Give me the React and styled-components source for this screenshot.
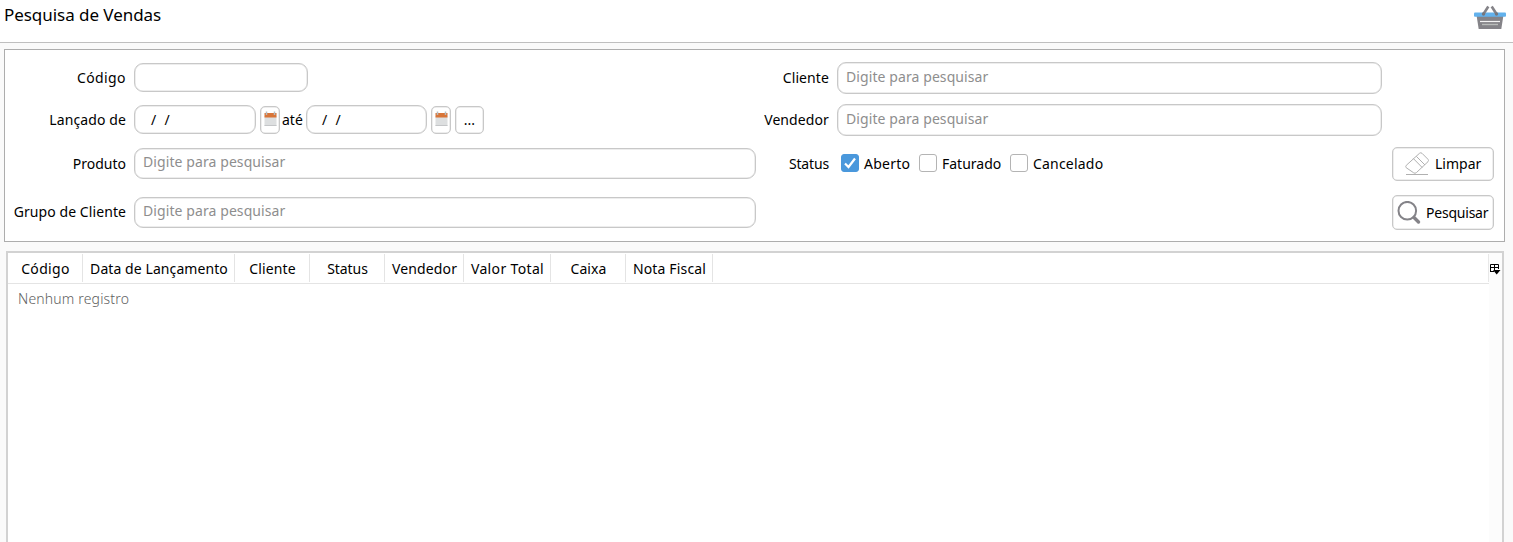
import React from "react";
import styled, { createGlobalStyle } from "styled-components";

const Global = createGlobalStyle`
  * { box-sizing: border-box; }
  html, body { margin: 0; height: 100%; overflow: hidden; background: #fafafa; }
  body { font-family: "Noto Sans", "Open Sans", sans-serif; font-size: 14px; color: #000; }
  button, input { font: inherit; color: inherit; }
`;

const Page = styled.div`
  height: 542px;
  display: flex;
  flex-direction: column;
  overflow: hidden;
`;

const Header = styled.header`
  height: 43px;
  flex: none;
  display: flex;
  justify-content: space-between;
  align-items: flex-start;
  padding: 3px 7px 0 4px;
  background: #fff;
  border-bottom: 1px solid #bfbfbf;
`;

const Title = styled.h1`
  margin: 0;
  font-size: 17px;
  font-weight: 400;
  line-height: 24px;
  letter-spacing: -0.05px;
`;

const Text = styled.span`
  display: inline-block;
  white-space: nowrap;
  line-height: 20px;
  letter-spacing: ${(p) => p.$ls ?? 0}px;
`;

const Panel = styled.section`
  flex: none;
  display: flex;
  width: 1501px;
  height: 193px;
  margin: 6px 0 0 4px;
  border: 1px solid #adadad;
  background: #fff;
`;

const Column = styled.div`
  width: ${(p) => p.$width}px;
  padding-top: ${(p) => p.$top}px;
  display: flex;
  flex-direction: column;
`;

const Row = styled.div`
  display: flex;
  align-items: center;
  height: ${(p) => p.$height}px;
  margin-bottom: ${(p) => p.$gap ?? 0}px;
`;

const Label = styled.label`
  flex: none;
  width: ${(p) => p.$width}px;
  margin-right: 8px;
  text-align: right;
  white-space: nowrap;
  line-height: 20px;
  padding-bottom: ${(p) => p.$lift ?? 0}px;
  letter-spacing: ${(p) => p.$ls ?? 0}px;
`;

const Field = styled.div`
  flex: none;
  width: ${(p) => p.$width}px;
  height: 100%;
  padding: ${(p) => p.$pad ?? "4px 8px"};
  border: 1px solid #c8c8c8;
  box-shadow: inset 0 0 0 0.5px #dcdcdc;
  border-radius: 9px;
  background: #fff;
  color: ${(p) => (p.$placeholder ? "#8e8e8e" : "#000")};
  letter-spacing: ${(p) => (p.$placeholder ? 0.09 : 0.3)}px;
  white-space: pre;
`;

const SmallButton = styled.button`
  flex: none;
  display: flex;
  justify-content: center;
  align-items: flex-start;
  width: ${(p) => p.$width}px;
  height: 28px;
  margin-left: ${(p) => p.$left}px;
  padding: ${(p) => p.$top ?? 4}px 0 0;
  border: 1px solid #c8c8c8;
  box-shadow: inset 0 0 0 0.5px #dcdcdc;
  border-radius: 5px;
  background: #fff;
`;

const Between = styled.span`
  width: 26px;
  flex: none;
  padding: 0 0 0 2px;
  line-height: 20px;
`;

const Checks = styled.div`
  display: flex;
  padding: 0 0 1px 4px;
`;

const Check = styled.span`
  display: flex;
  align-items: center;
  gap: 5px;
  width: ${(p) => p.$width}px;

  ${Text} {
    padding-top: 2px;
  }
`;

const Box = styled.span`
  flex: none;
  display: grid;
  place-items: center;
  width: 18px;
  height: 18px;
  border-radius: 3px;
  border: 1px solid ${(p) => (p.$on ? "#4a98dc" : "#b4b4b4")};
  background: ${(p) => (p.$on ? "#4a98dc" : "#fff")};
`;

const Actions = styled.div`
  width: 101px;
  margin-left: 11px;
  padding-top: 97px;
  display: flex;
  flex-direction: column;
  gap: 14px;
`;

const ActionButton = styled.button`
  display: flex;
  align-items: center;
  gap: ${(p) => p.$gap}px;
  width: 102px;
  height: ${(p) => p.$height}px;
  padding: 0 0 0 ${(p) => p.$left}px;
  border: 1px solid #c8c8c8;
  box-shadow: inset 0 0 0 0.5px #dcdcdc;
  border-radius: 5px;
  background: #fff;
`;

const Table = styled.section`
  flex: 1;
  display: flex;
  width: 1498px;
  margin: 9px 0 0 6px;
  border: 2px solid #d2d2d2;
  border-bottom: 0;
  background: #fff;
`;

const TableMain = styled.div`
  flex: 1;
`;

const HeadRow = styled.div`
  display: flex;
  height: 31px;
  padding-top: 1px;
  border-bottom: 1px solid #e4e4e4;
`;

const HeadCell = styled.div`
  width: ${(p) => p.$width}px;
  height: 28px;
  padding-left: 1px;
  border-right: 1px solid #e4e4e4;
  text-align: center;
  white-space: nowrap;
  line-height: 30px;
  letter-spacing: ${(p) => p.$ls ?? 0}px;
`;

const HeadRest = styled.div`
  flex: 1;
  height: 28px;
  border-right: 1px solid #e8e8e8;
`;

const Empty = styled.div`
  padding: 5px 10px;
  line-height: 20px;
  font-weight: 300;
  letter-spacing: 0.17px;
  color: #606060;
`;

const Gutter = styled.div`
  width: 13px;
  padding: 8px 0 0 1px;
  background: #fcfcfc;
`;

const Basket = () => (
  <svg width="32" height="28" viewBox="0 0 32 28">
    <path d="M2.500 12H29.500L27.300 26H4.700Z" fill="#848388" />
    <rect x="0" y="9.500" width="32" height="4.200" rx="1" fill="#62b1ec" />
    <path d="M14.300 3.500L9.500 11M17.700 3.500L22.500 11" stroke="#848388" strokeWidth="2.600" />
    <circle cx="9.500" cy="11" r="1.700" fill="#77767b" />
    <circle cx="22.500" cy="11" r="1.700" fill="#77767b" />
    <path d="M6 18.500H26" stroke="#f4f4f4" strokeWidth="1.200" />
    <path d="M8 21.500H24" stroke="#b9bcba" strokeWidth="1.400" />
  </svg>
);

const Calendar = () => (
  <svg width="13" height="16" viewBox="0 0 13 16">
    <rect x="0.500" y="5" width="12" height="10" fill="#dddfe0" />
    <rect x="0.500" y="14" width="12" height="1" fill="#c4c6c8" />
    <rect x="0.500" y="2" width="12" height="4.500" fill="#d87538" />
    <path d="M2.500 0.500V4M10.500 0.500V4" stroke="#b5bcc0" strokeWidth="1.500" />
  </svg>
);

const Eraser = () => (
  <svg width="24" height="24" viewBox="0 0 24 24" fill="none" stroke="#b0b0b0" strokeWidth="1">
    <path d="M14.500 1.300Q15.800 0.200 17 1.300L23 7.300Q24 8.500 23 9.700L11.500 20.500Q10 22 8.500 20.700L1.200 15.700Q0.200 14.500 1.300 13.300Z" />
    <path d="M8.300 6.500L17.200 15.500M11.300 4.300L20 13M1 22.500H23" />
  </svg>
);

const Magnifier = () => (
  <svg width="24" height="24" viewBox="0 0 24 24" fill="none" stroke="#848388">
    <circle cx="10.300" cy="9.700" r="8.800" strokeWidth="2" />
    <path d="M17 16.500L21.500 21" strokeWidth="3.400" strokeLinecap="round" />
  </svg>
);

const ColumnMenu = () => (
  <svg width="11" height="12" viewBox="0 0 11 12" fill="none" stroke="#000">
    <path d="M0.500 8V0.500H8.500V5M0 3.500H9M4.500 0V6M0 7.500H4" />
    <path d="M3 6H10.500L6.700 10.500Z" fill="#000" stroke="none" />
  </svg>
);

const columns = [
  ["Código", 75, 0.35], ["Data de Lançamento", 152, 0.08], ["Cliente", 75, 0.1], ["Status", 75, -0.05],
  ["Vendedor", 79, 0.15], ["Valor Total", 87, 0.35], ["Caixa", 75, 0.1], ["Nota Fiscal", 87, 0.15],
];

const hint = "Digite para pesquisar";

export default function App() {
  return (
    <Page>
      <Global />
      <Header>
        <Title>Pesquisa de Vendas</Title>
        <Basket />
      </Header>
      <Panel>
        <Column $width={751} $top={13}>
          <Row $height={29} $gap={13}>
            <Label $width={121} $ls={0.4}>Código</Label>
            <Field $width={174} />
          </Row>
          <Row $height={29} $gap={14}>
            <Label $width={121} $ls={0.1}>Lançado de</Label>
            <Field $width={122} $pad="4px 16px">/  /</Field>
            <SmallButton $width={20} $left={4}><Calendar /></SmallButton>
            <Between>até</Between>
            <Field $width={121} $pad="4px 15px">/  /</Field>
            <SmallButton $width={20} $left={4}><Calendar /></SmallButton>
            <SmallButton $width={29} $left={4} $top={3}>...</SmallButton>
          </Row>
          <Row $height={31} $gap={18}>
            <Label $width={121}>Produto</Label>
            <Field $width={622} $pad="3px 8px" $placeholder>{hint}</Field>
          </Row>
          <Row $height={31}>
            <Label $width={121} $lift={2} $ls={0.08}>Grupo de Cliente</Label>
            <Field $width={622} $pad="3px 8px" $placeholder>{hint}</Field>
          </Row>
        </Column>
        <Column $width={625} $top={12}>
          <Row $height={32} $gap={10}>
            <Label $width={73} $ls={0.1}>Cliente</Label>
            <Field $width={545} $placeholder>{hint}</Field>
          </Row>
          <Row $height={32} $gap={12}>
            <Label $width={73} $ls={0.1}>Vendedor</Label>
            <Field $width={545} $placeholder>{hint}</Field>
          </Row>
          <Row $height={31}>
            <Label $width={73} $ls={-0.15}>Status</Label>
            <Checks>
              <Check $width={78}>
                <Box $on>
                  <svg width="12" height="12" viewBox="0 0 12 12" fill="none" stroke="#fff" strokeWidth="2.200">
                    <path d="M1 6.500L4.500 10L11 1.500" />
                  </svg>
                </Box>
                <Text $ls={0.25}>Aberto</Text>
              </Check>
              <Check $width={91}><Box /><Text>Faturado</Text></Check>
              <Check $width={100}><Box /><Text $ls={0.2}>Cancelado</Text></Check>
            </Checks>
          </Row>
        </Column>
        <Actions>
          <ActionButton $height={34} $left={12} $gap={6}><Eraser /><Text>Limpar</Text></ActionButton>
          <ActionButton $height={35} $left={4} $gap={5}><Magnifier /><Text $ls={-0.22}>Pesquisar</Text></ActionButton>
        </Actions>
      </Panel>
      <Table>
        <TableMain>
          <HeadRow>
            {columns.map(([name, width, spacing]) => (
              <HeadCell key={name} $width={width} $ls={spacing}>{name}</HeadCell>
            ))}
            <HeadRest />
          </HeadRow>
          <Empty>Nenhum registro</Empty>
        </TableMain>
        <Gutter><ColumnMenu /></Gutter>
      </Table>
    </Page>
  );
}
